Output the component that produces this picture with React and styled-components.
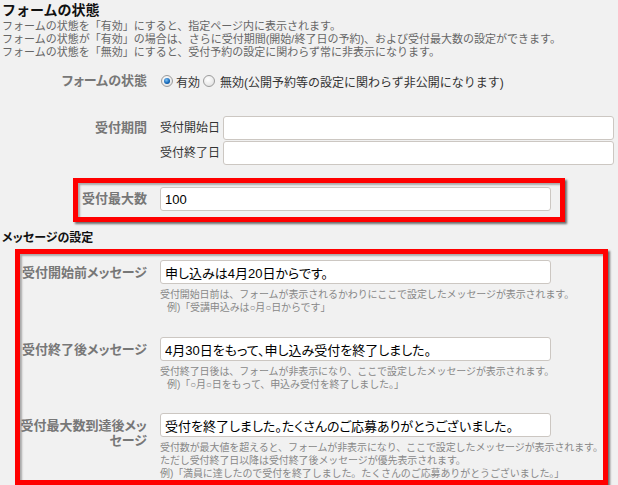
import styled, { createGlobalStyle, css } from "styled-components";

const FONT = `"Liberation Sans", "Noto Sans CJK JP", "Noto Sans", sans-serif`;

const GlobalStyle = createGlobalStyle`
  body {
    margin: 0;
    background: #f1f1f1;
    font-family: ${FONT};
  }
`;

const Page = styled.div`
  width: 618px;
  box-sizing: border-box;
  padding-left: 2px;
  color: #333;
`;

const Title = styled.h2`
  margin: 0;
  font-size: 14px;
  font-weight: bold;
  line-height: 20px;
  color: #111;
`;

const SectionTitle = styled.h3`
  margin: 6px 0 0;
  font-size: 12px;
  font-weight: bold;
  line-height: 20px;
  color: #111;
  font-feature-settings: "palt";
`;

const Desc = styled.p`
  margin: 0;
  font-size: 11px;
  line-height: 13px;
  color: #666;
`;

const Row = styled.div`
  display: grid;
  grid-template-columns: ${(p) => p.$label}px auto;
  align-items: start;
  margin-top: ${(p) => p.$top || 0}px;
`;

const Label = styled.div`
  text-align: right;
  padding-right: 13px;
  padding-top: ${(p) => p.$pad || 0}px;
  font-size: 13px;
  font-weight: bold;
  line-height: ${(p) => p.$lh || 24}px;
  color: #777;
  font-feature-settings: "palt";
`;

const RadioGroup = styled.div`
  display: flex;
  align-items: center;
  height: 20px;
  font-size: 12px;
  color: #333;
`;

const RadioOption = styled.label`
  display: flex;
  align-items: center;
  gap: ${(p) => p.$gap}px;
  margin-left: ${(p) => p.$left}px;
`;

const RadioMark = styled.span`
  display: inline-block;
  position: relative;
  width: 12px;
  height: 12px;
  box-sizing: border-box;
  border-radius: 50%;
  border: 1px solid #9c9c9c;
  background: radial-gradient(circle at 40% 35%, #ffffff 0%, #e8e8e8 65%, #cdcdcd 100%);
  ${(p) =>
    p.$checked &&
    css`
      &::after {
        content: "";
        position: absolute;
        left: 2px;
        top: 2px;
        width: 6px;
        height: 6px;
        border-radius: 50%;
        background: radial-gradient(circle at 40% 35%, #7cc2f5 0%, #1063b5 60%, #073f78 100%);
      }
    `}
`;

const PeriodGrid = styled.div`
  display: grid;
  grid-template-columns: 63px 391px;
  row-gap: 1px;
`;

const SubLabel = styled.div`
  font-size: 12px;
  line-height: 24px;
  color: #333;
`;

const Field = styled.input`
  display: block;
  box-sizing: border-box;
  width: 391px;
  height: 24px;
  margin: 0;
  padding: 0 4px;
  border: 1px solid #ccc7c2;
  border-radius: 3px;
  background: #fff;
  color: #000;
  font-family: ${FONT};
  font-size: 13px;
  font-feature-settings: "palt";
  outline: none;
`;

const Highlight = styled.div`
  box-sizing: border-box;
  width: ${(p) => p.$width}px;
  margin-top: ${(p) => p.$top}px;
  margin-left: ${(p) => p.$left}px;
  padding: ${(p) => p.$pad};
  border: 5px solid #ff0000;
  box-shadow: 2px 2px 2px rgba(0, 0, 0, 0.55), inset 2px 2px 2px rgba(0, 0, 0, 0.3);
`;

const Help = styled.div`
  margin-top: 4px;
  font-size: 10px;
  line-height: 13px;
  letter-spacing: -0.1px;
  color: #888;
`;

const HelpLine = styled.div`
  white-space: nowrap;
  padding-left: ${(p) => (p.$indent ? 7 : 0)}px;
`;

const messages = [
  {
    label: "受付開始前メッセージ",
    value: "申し込みは4月20日からです。",
    help: [
      "受付開始日前は、フォームが表示されるかわりにここで設定したメッセージが表示されます。",
      "例)「受講申込みは○月○日からです」",
    ],
    indent: true,
    top: 0,
  },
  {
    label: "受付終了後メッセージ",
    value: "4月30日をもって、申し込み受付を終了しました。",
    help: [
      "受付終了日後は、フォームが非表示になり、ここで設定したメッセージが表示されます。",
      "例)「○月○日をもって、申込み受付を終了しました。」",
    ],
    indent: true,
    top: 23,
  },
  {
    label: "受付最大数到達後メッセージ",
    value: "受付を終了しました。たくさんのご応募ありがとうございました。",
    help: [
      "受付数が最大値を超えると、フォームが非表示になり、ここで設定したメッセージが表示されます。",
      "ただし受付終了日以降は受付終了後メッセージが優先表示されます。",
      "例)「満員に達したので受付を終了しました。たくさんのご応募ありがとうございました。」",
    ],
    indent: false,
    top: 22,
  },
];

const App = () => {
  return (
    <Page>
      <GlobalStyle />
      <Title>フォームの状態</Title>
      <Desc>
        フォームの状態を「有効」にすると、指定ページ内に表示されます。
        <br />
        フォームの状態が「有効」の場合は、さらに受付期間(開始/終了日の予約)、および受付最大数の設定ができます。
        <br />
        フォームの状態を「無効」にすると、受付予約の設定に関わらず常に非表示になります。
      </Desc>

      <Row $label={158} $top={12}>
        <Label $lh={20}>フォームの状態</Label>
        <RadioGroup>
          <RadioOption $gap={3} $left={1}>
            <RadioMark $checked />
            有効
          </RadioOption>
          <RadioOption $gap={5} $left={3}>
            <RadioMark />
            無効(公開予約等の設定に関わらず非公開になります)
          </RadioOption>
        </RadioGroup>
      </Row>

      <Row $label={158} $top={25}>
        <Label>受付期間</Label>
        <PeriodGrid>
          <SubLabel>受付開始日</SubLabel>
          <Field defaultValue="" />
          <SubLabel>受付終了日</SubLabel>
          <Field defaultValue="" />
        </PeriodGrid>
      </Row>

      <Highlight $top={13} $left={71} $width={492} $pad="4px 9px 6px 0">
        <Row $label={82}>
          <Label>受付最大数</Label>
          <Field defaultValue="100" />
        </Row>
      </Highlight>

      <SectionTitle>メッセージの設定</SectionTitle>

      <Highlight $top={1} $left={13} $width={593} $pad="6px 0 0 0">
        {messages.map((m) => (
          <Row key={m.label} $label={140} $top={m.top}>
            <Label $lh={15} $pad={5}>
              {m.label}
            </Label>
            <div>
              <Field defaultValue={m.value} />
              <Help>
                {m.help.map((line, i) => (
                  <HelpLine key={i} $indent={m.indent && i === m.help.length - 1}>
                    {line}
                  </HelpLine>
                ))}
              </Help>
            </div>
          </Row>
        ))}
      </Highlight>
    </Page>
  );
};

export default App;
